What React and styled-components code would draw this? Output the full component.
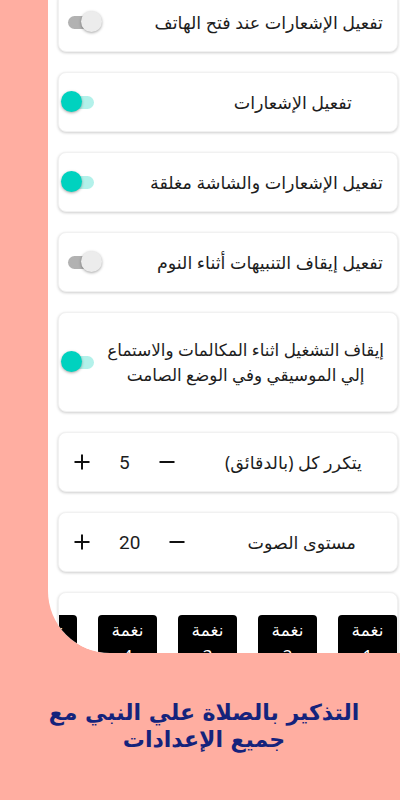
import React, { useState } from 'react'
import styled, { createGlobalStyle } from 'styled-components'

const GlobalStyle = createGlobalStyle`
  html, body {
    margin: 0;
    padding: 0;
    background: #ffaea1;
  }
`

const Page = styled.div`
  width: 400px;
  height: 800px;
  display: flex;
  flex-direction: column;
  background: #ffaea1;
  overflow: hidden;
  font-family: 'Noto Sans', 'DejaVu Sans', sans-serif;
`

const Screen = styled.div`
  margin-left: 48px;
  height: 653px;
  flex-shrink: 0;
  background: #fff;
  border-bottom-left-radius: 62px;
  overflow: hidden;
  direction: rtl;
`

const List = styled.div`
  margin-top: -8px;
  padding: 0 2px 0 10px;
  display: flex;
  flex-direction: column;
  gap: 20px;
`

const Card = styled.div`
  box-sizing: border-box;
  height: ${(p) => p.$height || 60}px;
  background: #fff;
  border: 1px solid #f1f1f1;
  border-radius: 8px;
  box-shadow: 0 1px 3px rgba(0, 0, 0, 0.2);
  display: flex;
  align-items: center;
  justify-content: space-between;
  overflow: hidden;
  flex-shrink: 0;
`

const Label = styled.div`
  padding-right: ${(p) => p.$inset || 14}px;
  font-size: 17.5px;
  color: #1d1d1d;
  white-space: nowrap;
`

const MultiLabel = styled.div`
  padding-right: 13px;
  font-size: 16.8px;
  line-height: 25px;
  color: #1d1d1d;
  text-align: center;
  white-space: nowrap;
`

const SwitchBox = styled.button`
  position: relative;
  width: 42px;
  height: 26px;
  margin-left: 2px;
  padding: 0;
  border: none;
  background: transparent;
  cursor: pointer;
  direction: ltr;
`

const Track = styled.span`
  position: absolute;
  left: 7px;
  top: 7px;
  width: 26px;
  height: 13px;
  border-radius: 7px;
  background: ${(p) => (p.$on ? '#b3f1ea' : '#b2b2b2')};
`

const Knob = styled.span`
  position: absolute;
  top: 2px;
  left: ${(p) => (p.$on ? '0' : '20px')};
  width: 21px;
  height: 21px;
  border-radius: 50%;
  background: ${(p) => (p.$on ? '#00d2bf' : '#ececec')};
  box-shadow: 0 1px 3px rgba(0, 0, 0, 0.35);
`

const Stepper = styled.div`
  display: flex;
  align-items: center;
  margin-left: 8px;
`

const StepButton = styled.button`
  width: 30px;
  height: 30px;
  padding: 0;
  border: none;
  background: transparent;
  display: flex;
  align-items: center;
  justify-content: center;
  cursor: pointer;
`

const Value = styled.span`
  padding: 0 22px;
  font-family: Roboto, 'Liberation Sans', sans-serif;
  font-size: 19px;
  color: #1d1d1d;
`

const ToneRow = styled.div`
  align-self: flex-start;
  margin-top: 22px;
  display: flex;
  gap: 21px;
  flex-shrink: 0;
`

const Tone = styled.div`
  width: 59px;
  height: 56px;
  flex-shrink: 0;
  background: #000;
  border-radius: 4px;
  color: #fff;
  font-size: 17px;
  line-height: 26px;
  text-align: center;
  padding-top: 2px;
  box-sizing: border-box;
`

const Caption = styled.div`
  padding-top: 46px;
  direction: rtl;
  text-align: center;
  font-family: 'DejaVu Sans', sans-serif;
  font-weight: bold;
  font-size: 22px;
  line-height: 27px;
  color: #14237c;
  padding-left: 8px;
`

const Switch = ({ initial }) => {
  const [on, setOn] = useState(initial)
  return (
    <SwitchBox onClick={() => setOn(!on)}>
      <Track $on={on} />
      <Knob $on={on} />
    </SwitchBox>
  )
}

const PlusIcon = () => (
  <svg width="16" height="16" viewBox="0 0 16 16">
    <path d="M8 0.5v15M0.5 8h15" stroke="#111" strokeWidth="2" />
  </svg>
)

const MinusIcon = () => (
  <svg width="16" height="16" viewBox="0 0 16 16">
    <path d="M0.5 8h15" stroke="#111" strokeWidth="2" />
  </svg>
)

const Counter = ({ initial }) => {
  const [value, setValue] = useState(initial)
  return (
    <Stepper>
      <StepButton onClick={() => setValue(value - 1)}>
        <MinusIcon />
      </StepButton>
      <Value>{value}</Value>
      <StepButton onClick={() => setValue(value + 1)}>
        <PlusIcon />
      </StepButton>
    </Stepper>
  )
}

const toggles = [
  { text: 'تفعيل الإشعارات عند فتح الهاتف', on: false },
  { text: 'تفعيل الإشعارات', on: true, inset: 45 },
  { text: 'تفعيل الإشعارات والشاشة مغلقة', on: true },
  { text: 'تفعيل إيقاف التنبيهات أثناء النوم', on: false },
]

const App = () => (
  <Page>
    <GlobalStyle />
    <Screen>
      <List>
        {toggles.map((t) => (
          <Card key={t.text}>
            <Label $inset={t.inset}>{t.text}</Label>
            <Switch initial={t.on} />
          </Card>
        ))}
        <Card $height={100}>
          <MultiLabel>
            إيقاف التشغيل اثناء المكالمات والاستماع
            <br />
            إلي الموسيقي وفي الوضع الصامت
          </MultiLabel>
          <Switch initial={true} />
        </Card>
        <Card>
          <Label $inset={35}>يتكرر كل (بالدقائق)</Label>
          <Counter initial={5} />
        </Card>
        <Card>
          <Label $inset={41}>مستوى الصوت</Label>
          <Counter initial={20} />
        </Card>
        <Card $height={80}>
          <ToneRow>
            {[1, 2, 3, 4, 5].map((n) => (
              <Tone key={n}>
                نغمة
                <br />
                {n}
              </Tone>
            ))}
          </ToneRow>
        </Card>
      </List>
    </Screen>
    <Caption>
      التذكير بالصلاة علي النبي مع
      <br />
      جميع الإعدادات
    </Caption>
  </Page>
)

export default App
